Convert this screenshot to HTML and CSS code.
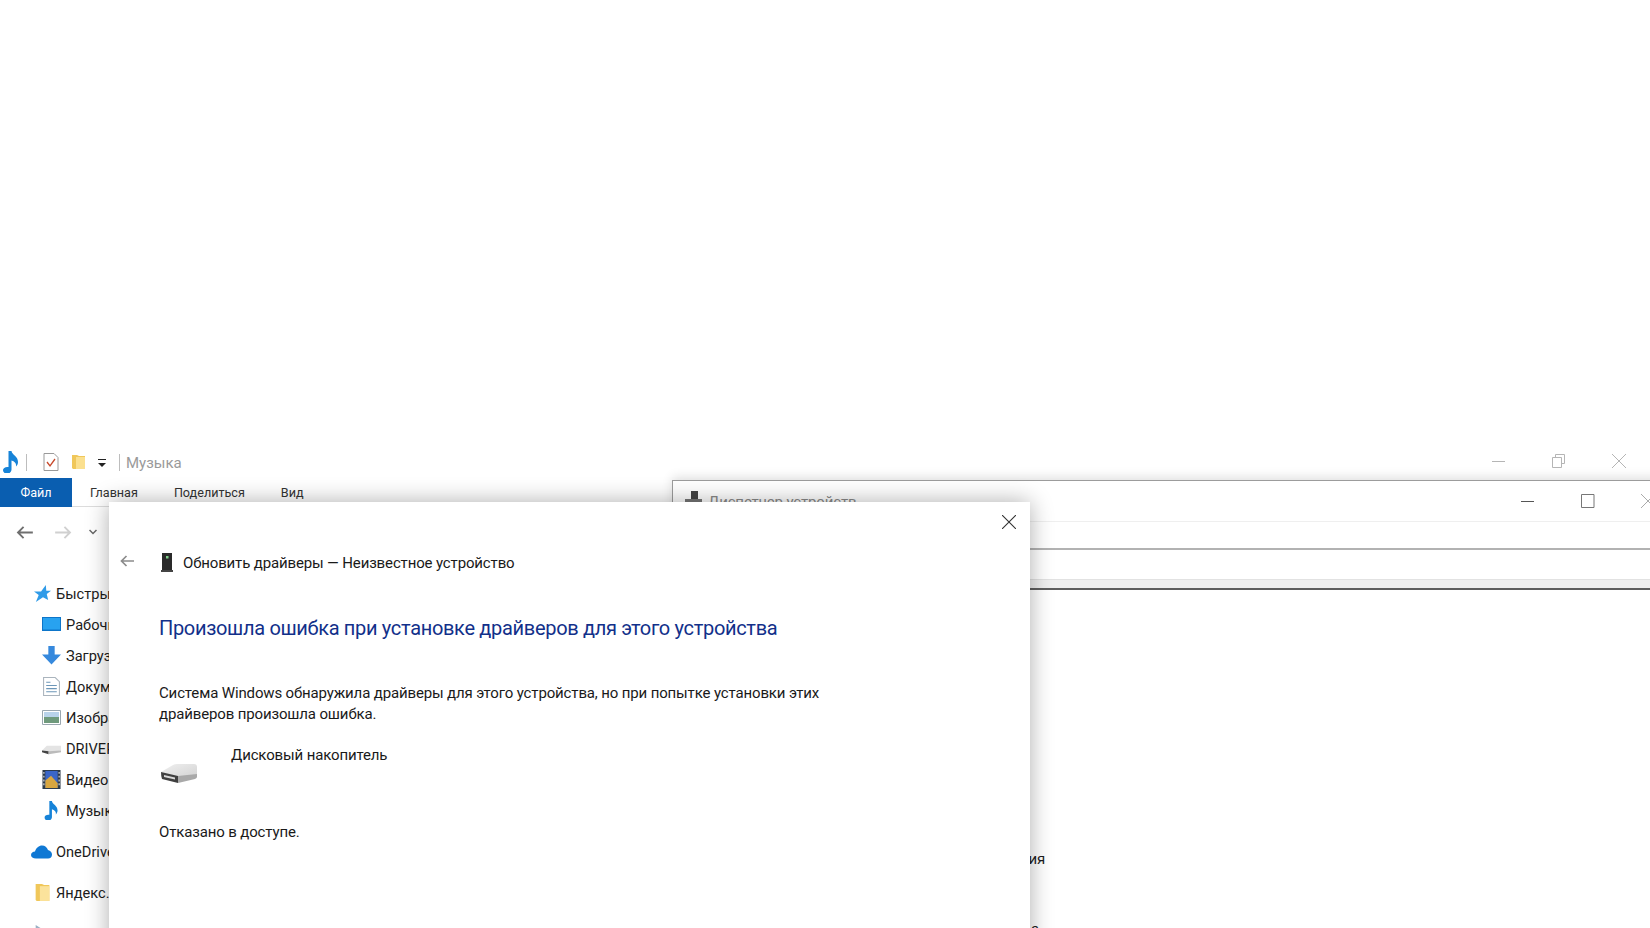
FILE: index.html
```html
<!DOCTYPE html>
<html lang="ru">
<head>
<meta charset="utf-8">
<title>Обновить драйверы</title>
<link rel="stylesheet" href="styles.css">
</head>
<body>
<div class="desktop">

  <section class="explorer">
    <header class="qat">
      <svg class="i-note" viewBox="0 0 16 22"><path d="M5.500 0h3c.5 4 6.500 5 6.500 11 0 2-1 3.500-2 4.500 .5-3-1-5-4.500-6v9c0 2.500-2.500 4.500-4.500 4.500S0 21 0 19s2.500-3.500 5.500-3z" fill="#1683d8"/></svg>
      <span class="qat-sep first"></span>
      <svg class="i-check" viewBox="0 0 16 18"><path d="M1 .5h10l4 4v13H1z" fill="#fff" stroke="#9a9a9a"/><path d="M4 9l3 4 5-7" fill="none" stroke="#c8492b" stroke-width="1.300"/></svg>
      <svg class="i-qfolder" viewBox="0 0 13 16"><path d="M0 1h5l2 1h6v13H1l-1-1z" fill="#f0c75a"/><path d="M4 3h9v12H4z" fill="#fbe08f"/></svg>
      <svg class="i-drop" viewBox="0 0 10 9"><path d="M1 0h8v1H1z" fill="#222"/><path d="M1 4h8L5 8z" fill="#222"/></svg>
      <span class="qat-sep"></span>
      <span class="qat-title">Музыка</span>
      <div class="winbtns">
        <svg viewBox="0 0 14 14"><path d="M0 7.500h13" stroke="#b5b5b5"/></svg>
        <svg viewBox="0 0 14 14"><path d="M3.500 3V.5h9v9H10M.5 3.500h9v10h-9z" fill="none" stroke="#b5b5b5"/></svg>
        <svg viewBox="0 0 14 14"><path d="M0 0l14 14M14 0L0 14" stroke="#b5b5b5"/></svg>
      </div>
    </header>
    <nav class="ribbon">
      <span class="tab file">Файл</span>
      <span class="tab t-home">Главная</span>
      <span class="tab t-share">Поделиться</span>
      <span class="tab t-view">Вид</span>
    </nav>
    <div class="navrow">
      <svg class="nav-back" viewBox="0 0 18 14"><path d="M18 7H2M8 1L2 7l6 6" fill="none" stroke="#6f6f6f" stroke-width="2"/></svg>
      <svg class="nav-fwd" viewBox="0 0 18 14"><path d="M0 7h16M10 1l6 6-6 6" fill="none" stroke="#d0d0d0" stroke-width="2"/></svg>
      <svg class="nav-down" viewBox="0 0 8 6"><path d="M.5 1L4 4.500 7.500 1" fill="none" stroke="#666" stroke-width="1.500"/></svg>
    </div>
    <ul class="tree">
      <li class="row top"><svg viewBox="0 0 18 18"><path d="M12.500 0l.5 6h5l-4.500 3.500L15 16l-5.500-3L2 18l3-7.500L0 7h7.500z" fill="#2f9be8"/></svg><span>Быстрый доступ</span></li>
      <li class="row"><svg viewBox="0 0 19 15"><path d="M0 0h19v14H0z" fill="#0d75c9"/><path d="M1 1h17v11.500H1z" fill="#28a2f0"/></svg><span>Рабочий стол</span></li>
      <li class="row"><svg viewBox="0 0 18 18"><path d="M6 0h6v8h6l-9 9.500L0 8h6z" fill="#3689dd"/></svg><span>Загрузки</span></li>
      <li class="row"><svg viewBox="0 0 16 18"><path d="M.5.500h11l4 4v13H.5z" fill="#fff" stroke="#aab4bd"/><path d="M3 8h10M3 11h10M3 14h10M3 5h4" stroke="#6c96b8"/></svg><span>Документы</span></li>
      <li class="row"><svg viewBox="0 0 19 15"><path d="M.5.500h18v14H.5z" fill="#fff" stroke="#9aa7b0"/><path d="M2 2h15v5H2z" fill="#b9d3ea"/><path d="M2 7h15v6H2z" fill="#6f9a7c"/></svg><span>Изображения</span></li>
      <li class="row"><svg viewBox="0 0 20 12"><path d="M0 8l5-5h15v5l-13 3z" fill="#e4e4e4"/><path d="M0 8l7 1v3L0 10z" fill="#444"/><path d="M7 9l13-1v2L7 12z" fill="#bbb"/></svg><span>DRIVERS (D:)</span></li>
      <li class="row"><svg viewBox="0 0 19 20"><path d="M0 0h19v20H0z" fill="#2c3a4a"/><path d="M3 1h13v18H3z" fill="#3a66c8"/><path d="M3 11l6-5 7 8v5H3z" fill="#d8a640"/><path d="M1 2h1v2H1zm0 4h1v2H1zm0 4h1v2H1zm0 4h1v2H1zm16-12h1v2h-1zm0 4h1v2h-1zm0 4h1v2h-1zm0 4h1v2h-1z" fill="#fff"/></svg><span>Видео</span></li>
      <li class="row"><svg viewBox="0 0 16 22"><path d="M5.500 0h3c.5 4 6.500 5 6.500 11 0 2-1 3.500-2 4.500 .5-3-1-5-4.500-6v9c0 2.500-2.500 4.500-4.500 4.500S0 21 0 19s2.500-3.500 5.500-3z" fill="#1683d8"/></svg><span>Музыка</span></li>
      <li class="row top gap"><svg viewBox="0 0 21 14"><path d="M5 13.500C2 13.500 0 12 0 10c0-2 2-3.500 4-3.500C5 3 8 .5 11 .5c3 0 5 2 6 4.500 2.500.5 4 2.500 4 4.500 0 2.500-1.500 4-4 4z" fill="#0f78d4"/></svg><span>OneDrive</span></li>
      <li class="row top gap2"><svg viewBox="0 0 13 18"><path d="M0 1h6l2 1h5v15H1l-1-1z" fill="#f0c75a"/><path d="M4 3h9v14H4z" fill="#fbe39c"/></svg><span>Яндекс.Диск</span></li>
      <li class="row top gap2"><svg viewBox="0 0 10 10"><path d="M1 0l8 5-8 5z" fill="#9ab0c4"/></svg><span></span></li>
    </ul>
  </section>

  <section class="devmgr">
    <header class="dm-title">
      <svg class="dm-icon" viewBox="0 0 17 17"><path d="M6 0h7v8H6z" fill="#444"/><path d="M0 8h17v9H0z" fill="#777"/></svg>
      <span class="dm-name">Диспетчер устройств</span>
      <div class="dm-btns">
        <svg viewBox="0 0 14 16"><path d="M0 8.500h13" stroke="#555"/></svg>
        <svg viewBox="0 0 14 16"><path d="M.5 1.500h12.500v13H.5z" fill="none" stroke="#777"/></svg>
        <svg viewBox="0 0 14 16"><path d="M0 1l14 14M14 1L0 15" stroke="#aaa"/></svg>
      </div>
    </header>
    <div class="dm-menu"></div>
    <div class="dm-toolbar"></div>
    <div class="dm-strip"></div>
    <div class="dm-body"><span class="dm-frag">Сведения</span><span class="dm-frag2">а</span></div>
  </section>

  <section class="dialog">
    <svg class="dlg-close" viewBox="0 0 14 14"><path d="M0 0l14 14M14 0L0 14" stroke="#333" stroke-width="1.100"/></svg>
    <div class="dlg-head">
      <svg class="dlg-back" viewBox="0 0 14 12"><path d="M14 6H1.500M6.500 1l-5 5 5 5" fill="none" stroke="#8c8c8c" stroke-width="1.700"/></svg>
      <svg class="dlg-dev" viewBox="0 0 12 19"><path d="M1 0h10v17H1z" fill="#2a2a2a"/><path d="M0 17h12v2H0z" fill="#444"/><path d="M5 3h2.500v2.500H5z" fill="#7fd08a"/></svg>
      <span>Обновить драйверы — Неизвестное устройство</span>
    </div>
    <h1 class="dlg-h">Произошла ошибка при установке драйверов для этого устройства</h1>
    <p class="dlg-p">Система Windows обнаружила драйверы для этого устройства, но при попытке установки этих<br>драйверов произошла ошибка.</p>
    <div class="dlg-dev-row">
      <svg class="disk" viewBox="0 0 36 19"><defs><linearGradient id="dtop" x1="0" y1="0" x2="1" y2="1"><stop offset="0" stop-color="#f0f0f0"/><stop offset="1" stop-color="#d2d2d2"/></linearGradient></defs><path d="M0 8L12 1q2-1 4-1h17q3 0 3 3v8l-19 3z" fill="url(#dtop)"/><path d="M0 8l17 4v7L1 15q-1-3-1-7z" fill="#3f3f3f"/><path d="M3 11l11 2.500v2L3 13z" fill="#d8d8d8"/><path d="M17 12l19-2v3q0 1-2 2l-17 4z" fill="#a9a9a9"/></svg>
      <span class="dev-label">Дисковый накопитель</span>
    </div>
    <p class="dlg-err">Отказано в доступе.</p>
  </section>

</div>
</body>
</html>
```

FILE: styles.css
```css
* { box-sizing: border-box; }
html, body { margin: 0; padding: 0; height: 100%; }
body { background: #fff; font-family: Roboto, "Open Sans", sans-serif; color: #1c1c1c; overflow: hidden; }
.desktop { position: relative; width: 1650px; height: 928px; overflow: hidden; background: #fff; }

/* Explorer */
.explorer { position: absolute; left: 0; top: 446px; width: 1650px; height: 482px; overflow: hidden; font-size: 14.600px; }
.qat { height: 32px; display: flex; align-items: center; padding-left: 3px; }
.i-note { width: 16px; height: 22px; }
.qat-sep { width: 1px; height: 17px; background: #bdbdbd; margin-left: 7px; }
.qat-sep.first { margin-left: 7px; margin-right: 16px; }
.i-check { width: 16px; height: 18px; }
.i-qfolder { width: 13px; height: 16px; margin-left: 13px; }
.i-drop { width: 10px; height: 9px; margin-left: 12px; margin-top: 3px; margin-right: 5px; }
.qat-title { color: #9a9a9a; font-size: 15px; margin-left: 6px; margin-top: 2px; }
.winbtns { margin-left: auto; display: flex; gap: 46px; padding-right: 24px; margin-top: -3px; }
.winbtns svg { width: 14px; height: 14px; }
.ribbon { height: 29px; display: flex; align-items: center; border-bottom: 1px solid #dcdcdc; font-size: 12.600px; color: #333; }
.tab.file { width: 72px; height: 29px; background: #0a5eb0; color: #fff; display: flex; align-items: center; justify-content: center; }
.t-home { margin-left: 18px; }
.t-share { margin-left: 36px; }
.t-view { margin-left: 36px; }
.navrow { height: 50px; display: flex; align-items: center; padding-left: 16px; }
.nav-back { width: 17px; height: 13px; }
.nav-fwd { width: 17px; height: 13px; margin-left: 22px; }
.nav-down { width: 8px; height: 6px; margin-left: 17px; }
.tree { list-style: none; margin: 21px 0 0; padding: 0; }
.row { height: 31px; display: flex; align-items: center; gap: 5px; padding-left: 42px; }
.row svg { width: 19px; height: 19px; flex: none; }
.row.top { padding-left: 34px; }
.row.top svg { width: 17px; }
.row.top span { margin-left: 0; }
.row.gap { margin-top: 10px; padding-left: 31px; }
.row.gap svg { width: 21px; height: 14px; }
.row.gap span { margin-left: -1px; }
.row.gap2 { margin-top: 10px; }

/* Device manager */
.devmgr { position: absolute; left: 672px; top: 480px; width: 990px; height: 460px; background: #fff; border: 1px solid #9c9c9c; box-shadow: 0 -3px 10px rgba(0,0,0,.12); font-size: 15px; letter-spacing: -.14px; }
.dm-title { height: 41px; display: flex; align-items: flex-start; padding: 11px 0 0 12px; border-bottom: 1px solid #efefef; }
.dm-icon { width: 17px; height: 17px; margin-top: -1px; }
.dm-name { color: #8a8a8a; margin-left: 6px; line-height: 20px; }
.dm-btns { margin-left: auto; display: flex; gap: 46px; margin-top: 1px; margin-right: 6px; }
.dm-btns svg { width: 14px; height: 16px; }
.dm-menu { height: 28px; border-bottom: 2px solid #b2b2b2; }
.dm-toolbar { height: 30px; border-bottom: 1px solid #e2e2e2; }
.dm-strip { height: 10px; background: #efefef; border-bottom: 2px solid #5e5e5e; }
.dm-body { position: relative; height: 340px; }
.dm-frag { position: absolute; right: 616px; top: 260px; color: #1c1c1c; }
.dm-frag2 { position: absolute; left: 358px; top: 330px; }

/* Dialog */
.dialog { position: absolute; left: 109px; top: 502px; width: 921px; height: 460px; background: #fff; box-shadow: 0 0 22px rgba(0,0,0,.32); padding: 0 50px; font-size: 15px; letter-spacing: -.14px; color: #1a1a1a; }
.dlg-close { position: absolute; right: 14px; top: 13px; width: 14px; height: 14px; }
.dlg-head { display: flex; align-items: center; height: 20px; margin-top: 50px; }
.dlg-back { width: 14px; height: 12px; margin-left: -39px; margin-top: -3px; }
.dlg-dev { width: 12px; height: 19px; margin-left: 27px; }
.dlg-head span { margin-left: 10px; margin-top: 1px; }
.dlg-h { margin: 43px 0 0; font-size: 20px; letter-spacing: -.32px; font-weight: 400; line-height: 27px; color: #12308a; }
.dlg-p { margin: 41px 0 0; line-height: 21px; }
.dlg-dev-row { display: flex; margin-top: 20px; height: 42px; }
.disk { width: 36px; height: 19px; margin: 19px 0 0 2px; flex: none; }
.dev-label { margin-left: 34px; line-height: 20px; }
.dlg-err { margin: 35px 0 0; line-height: 20px; }
```
